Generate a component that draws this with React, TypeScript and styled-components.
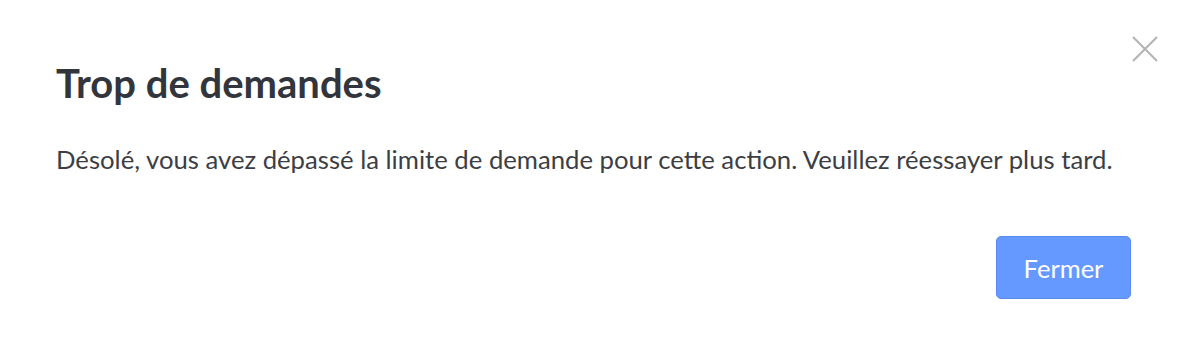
import React from "react";
import styled, { createGlobalStyle } from "styled-components";

const GlobalStyle = createGlobalStyle`
  html, body { margin: 0; padding: 0; background: #ffffff; }
  body { font-family: Lato, "Open Sans", Arial, sans-serif; }
  * { box-sizing: border-box; }
`;

const Dialog = styled.div`
  position: relative;
  width: 1192px;
  height: 360px;
  background: #ffffff;
  padding: 59px 61px 0 56px;
  display: flex;
  flex-direction: column;
`;

const Title = styled.h2`
  margin: 0;
  font-family: Lato, sans-serif;
  font-weight: 700;
  font-size: 40px;
  line-height: 48px;
  color: #32353c;
`;

const Body = styled.p`
  margin: 34px 0 0 0;
  font-family: Lato, sans-serif;
  font-weight: 400;
  font-size: 25.7px;
  line-height: 36px;
  color: #3c3e44;
`;

const Footer = styled.div`
  display: flex;
  justify-content: flex-end;
  margin-top: 59px;
`;

const PrimaryButton = styled.button`
  width: 135px;
  height: 63px;
  border: 1px solid #5a8bef;
  border-radius: 5px;
  background: #6699ff;
  color: #ffffff;
  font-family: Lato, sans-serif;
  font-size: 25.5px;
  font-weight: 400;
  cursor: pointer;
`;

const CloseButton = styled.button`
  position: absolute;
  top: 36px;
  right: 34px;
  width: 26px;
  height: 26px;
  padding: 0;
  border: none;
  background: transparent;
  cursor: pointer;
  display: flex;
  align-items: center;
  justify-content: center;
`;

export default function App() {
  return (
    <>
      <GlobalStyle />
      <Dialog>
        <CloseButton aria-label="Fermer">
          <svg width="26" height="26" viewBox="0 0 26 26">
            <path d="M1 1 L25 25 M25 1 L1 25" stroke="#b3b3b3" strokeWidth="2" />
          </svg>
        </CloseButton>
        <Title>Trop de demandes</Title>
        <Body>
          Désolé, vous avez dépassé la limite de demande pour cette action. Veuillez réessayer plus tard.
        </Body>
        <Footer>
          <PrimaryButton>Fermer</PrimaryButton>
        </Footer>
      </Dialog>
    </>
  );
}
